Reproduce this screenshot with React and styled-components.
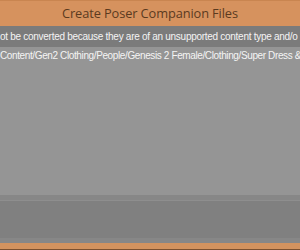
import React from "react";
import styled, { createGlobalStyle } from "styled-components";

const Global = createGlobalStyle`
  html, body { margin: 0; padding: 0; background: #959595; }
  #root { width: 300px; height: 250px; overflow: hidden; }
`;

const Dialog = styled.div`
  width: 300px;
  height: 250px;
  display: flex;
  flex-direction: column;
  background: #959595;
  overflow: hidden;
`;

const TitleBar = styled.div`
  height: 26px;
  flex: none;
  background: #d6925e;
  border-top: 1px solid #c98550;
  box-sizing: border-box;
  display: flex;
  align-items: center;
  justify-content: center;
  font-family: "Open Sans", "Noto Sans", sans-serif;
  font-size: 12.8px;
  letter-spacing: -0.1px;
  color: #5b3a1e;
  padding-bottom: 1px;
`;

const MessageRow = styled.div`
  height: ${(p) => p.$h}px;
  flex: none;
  background: ${(p) => p.$bg};
  display: flex;
  align-items: center;
  white-space: nowrap;
  overflow: hidden;
  font-family: "Liberation Sans", Arial, sans-serif;
  font-size: 10px;
  letter-spacing: ${(p) => p.$ls}px;
  color: #f4f4f4;
`;

const ListArea = styled.div`
  flex: 1;
  background: #959595;
`;

const Footer = styled.div`
  flex: none;
  height: 38px;
  background: #808080;
  border-top: 5px solid #878787;
  border-bottom: 5px solid #878787;
  box-shadow: inset 0 1px 0 #8e8e8e;
`;

const BottomEdge = styled.div`
  flex: none;
  height: 7px;
  background: #d3935f;
  border-bottom: 1px solid #7a5030;
  box-sizing: border-box;
`;

export default function App() {
  return (
    <>
      <Global />
      <Dialog>
        <TitleBar>Create Poser Companion Files</TitleBar>
        <MessageRow $bg="#7b7b7b" $h={21} $ls={-0.28}>
          ot be converted because they are of an unsupported content type and/o
        </MessageRow>
        <MessageRow $bg="#959595" $h={17} $ls={-0.38}>
          Content/Gen2 Clothing/People/Genesis 2 Female/Clothing/Super Dress &amp;
        </MessageRow>
        <ListArea />
        <Footer />
        <BottomEdge />
      </Dialog>
    </>
  );
}
